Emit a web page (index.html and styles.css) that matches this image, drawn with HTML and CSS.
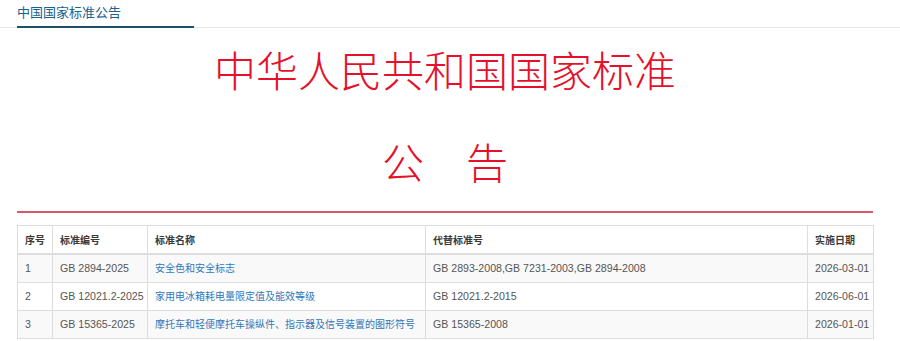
FILE: index.html
```html
<!DOCTYPE html>
<html lang="zh-CN">
<head>
<meta charset="utf-8">
<title>中国国家标准公告</title>
<link rel="stylesheet" href="styles.css">
</head>
<body>
<div class="topbar">
  <div class="topbar-title">中国国家标准公告</div>
</div>
<div class="page">
  <h1 class="doc-title">中华人民共和国国家标准</h1>
  <h2 class="doc-sub">公　告</h2>
  <div class="red-rule"></div>
  <table class="std-table">
    <colgroup>
      <col class="c1"><col class="c2"><col class="c3"><col class="c4"><col class="c5">
    </colgroup>
    <thead>
      <tr><th>序号</th><th>标准编号</th><th>标准名称</th><th>代替标准号</th><th>实施日期</th></tr>
    </thead>
    <tbody>
      <tr><td>1</td><td>GB 2894-2025</td><td><a href="#">安全色和安全标志</a></td><td>GB 2893-2008,GB 7231-2003,GB 2894-2008</td><td>2026-03-01</td></tr>
      <tr><td>2</td><td>GB 12021.2-2025</td><td><a href="#">家用电冰箱耗电量限定值及能效等级</a></td><td>GB 12021.2-2015</td><td>2026-06-01</td></tr>
      <tr><td>3</td><td>GB 15365-2025</td><td><a href="#">摩托车和轻便摩托车操纵件、指示器及信号装置的图形符号</a></td><td>GB 15365-2008</td><td>2026-01-01</td></tr>
    </tbody>
  </table>
</div>
</body>
</html>
```

FILE: styles.css
```css
* { box-sizing: border-box; }
html, body { margin: 0; padding: 0; background: #fff; }
body {
  font-family: "Liberation Sans", "Noto Sans CJK SC", sans-serif;
  color: #333;
  overflow: hidden;
}
.topbar {
  padding-left: 17px;
  border-bottom: 1px solid #e6e6e6;
}
.topbar-title {
  width: 177px;
  padding-top: 3px;
  padding-bottom: 6px;
  line-height: 17px;
  font-size: 13px;
  color: #215f8c;
  font-family: "Noto Sans CJK SC", sans-serif;
  border-bottom: 2px solid #1f4f66;
  margin-bottom: -1px;
}
.page {
  padding: 0 27px 0 17px;
}
.doc-title {
  margin: 20px 0 0;
  text-align: center;
  font-family: "Noto Sans CJK SC", sans-serif;
  font-weight: 300;
  font-size: 42px;
  line-height: 42px;
  color: #e5102a;
}
.doc-sub {
  margin: 50px 0 0;
  text-align: center;
  font-family: "Noto Sans CJK SC", sans-serif;
  font-weight: 300;
  font-size: 42px;
  line-height: 42px;
  color: #e5102a;
}
.red-rule {
  margin-top: 29px;
  height: 2px;
  background: #d9576a;
}
.std-table {
  margin-top: 12px;
  width: 856px;
  border-collapse: collapse;
  table-layout: fixed;
  font-size: 10.6px;
}
.c1 { width: 35px; }
.c2 { width: 95px; }
.c3 { width: 278px; }
.c4 { width: 382px; }
.c5 { width: 66px; }
.std-table th, .std-table td {
  border: 1px solid #dddddd;
  padding: 5px 4px 5px 7px;
  line-height: 17px;
  text-align: left;
  white-space: nowrap;
  overflow: hidden;
}
.std-table th {
  font-size: 10px;
  font-weight: 600;
  color: #3a3a3a;
  padding-top: 6px;
  padding-bottom: 4px;
  border-bottom: 2px solid #dddddd;
}
.std-table td { color: #555; }
.std-table tbody tr:nth-child(odd) td { background: #f9f9f9; }
.std-table a {
  font-size: 10px;
  color: #3276b9;
  text-decoration: none;
}
```
